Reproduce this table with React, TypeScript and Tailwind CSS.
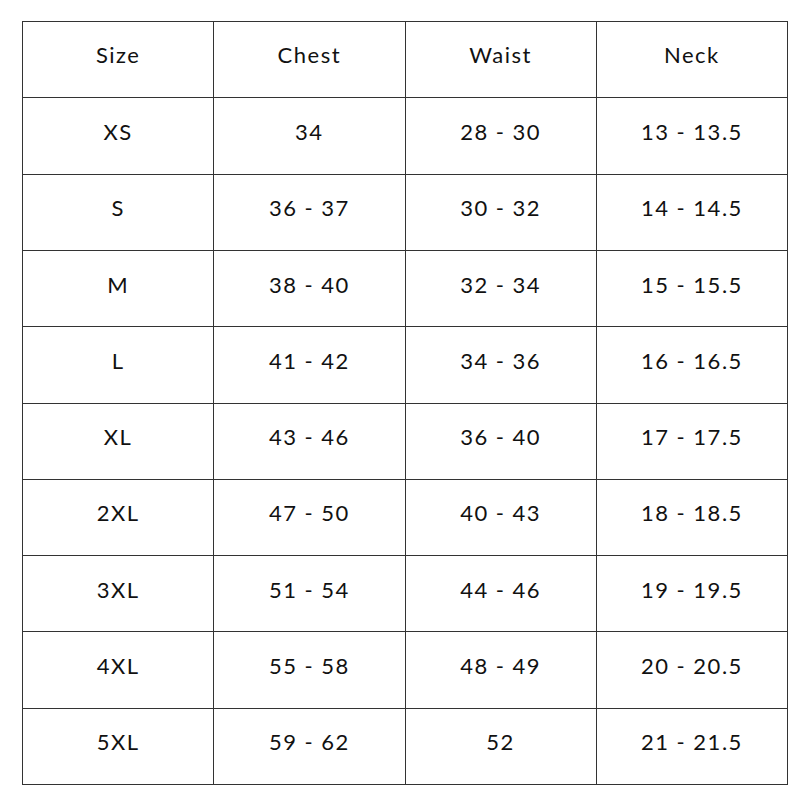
import React from "react";

const rows: string[][] = [
  ["Size", "Chest", "Waist", "Neck"],
  ["XS", "34", "28 - 30", "13 - 13.5"],
  ["S", "36 - 37", "30 - 32", "14 - 14.5"],
  ["M", "38 - 40", "32 - 34", "15 - 15.5"],
  ["L", "41 - 42", "34 - 36", "16 - 16.5"],
  ["XL", "43 - 46", "36 - 40", "17 - 17.5"],
  ["2XL", "47 - 50", "40 - 43", "18 - 18.5"],
  ["3XL", "51 - 54", "44 - 46", "19 - 19.5"],
  ["4XL", "55 - 58", "48 - 49", "20 - 20.5"],
  ["5XL", "59 - 62", "52", "21 - 21.5"],
];

export default function App() {
  return (
    <div className="w-[800px] h-[800px] bg-white pl-[22px] pt-[21px]">
      <div
        className="grid grid-cols-4 grid-rows-10 gap-px bg-[#333] p-px w-[766px] h-[764px]"
        style={{ fontFamily: "Lato, 'Noto Sans', sans-serif" }}
      >
        {rows.flatMap((r, i) =>
          r.map((c, j) => (
            <div
              key={`${i}-${j}`}
              className={`bg-white flex items-center justify-center text-[22px] text-[#111] tracking-[1.5px] whitespace-pre ${i === 0 ? "pb-[10px]" : "pb-[9px]"}`}
            >
              {c}
            </div>
          ))
        )}
      </div>
    </div>
  );
}
